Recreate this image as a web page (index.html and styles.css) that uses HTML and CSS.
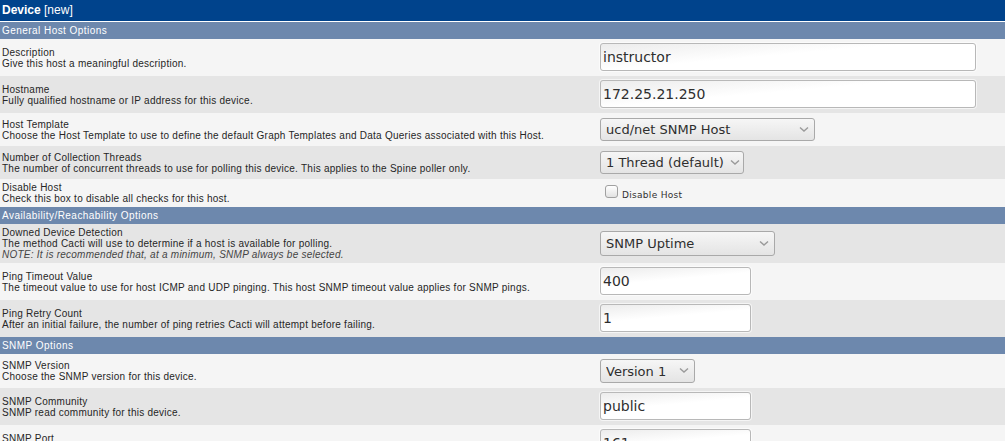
FILE: index.html
```html
<!DOCTYPE html>
<html>
<head>
<meta charset="utf-8">
<title>Device [new]</title>
<link rel="stylesheet" href="styles.css">
</head>
<body>
<div class="page-title"><b>Device</b> [new]</div>

<div class="section">General Host Options</div>
<div class="row light">
  <div class="lbl"><div>Description</div><div>Give this host a meaningful description.</div></div>
  <div class="ctl in"><input class="txt wide" type="text" value="instructor"></div>
</div>
<div class="row dark">
  <div class="lbl"><div>Hostname</div><div>Fully qualified hostname or IP address for this device.</div></div>
  <div class="ctl in"><input class="txt wide" type="text" value="172.25.21.250"></div>
</div>
<div class="row light">
  <div class="lbl"><div>Host Template</div><div>Choose the Host Template to use to define the default Graph Templates and Data Queries associated with this Host.</div></div>
  <div class="ctl sel"><span class="selwrap w-tpl"><select><option>ucd/net SNMP Host</option></select><svg class="chev" width="10" height="7" viewBox="0 0 10 7"><path d="M1 1.5 L5 5 L9 1.5" fill="none" stroke="#9a9a9a" stroke-width="1.4"/></svg></span></div>
</div>
<div class="row dark">
  <div class="lbl"><div>Number of Collection Threads</div><div>The number of concurrent threads to use for polling this device. This applies to the Spine poller only.</div></div>
  <div class="ctl sel"><span class="selwrap w-thr"><select><option>1 Thread (default)</option></select><svg class="chev" width="10" height="7" viewBox="0 0 10 7"><path d="M1 1.5 L5 5 L9 1.5" fill="none" stroke="#9a9a9a" stroke-width="1.4"/></svg></span></div>
</div>
<div class="row light">
  <div class="lbl"><div>Disable Host</div><div>Check this box to disable all checks for this host.</div></div>
  <div class="ctl chk"><input type="checkbox" class="cb" id="dis"><label for="dis" class="cblbl">Disable Host</label></div>
</div>

<div class="section">Availability/Reachability Options</div>
<div class="row dark">
  <div class="lbl"><div>Downed Device Detection</div><div>The method Cacti will use to determine if a host is available for polling.</div><div class="note">NOTE: It is recommended that, at a minimum, SNMP always be selected.</div></div>
  <div class="ctl sel"><span class="selwrap w-up"><select><option>SNMP Uptime</option></select><svg class="chev" width="10" height="7" viewBox="0 0 10 7"><path d="M1 1.5 L5 5 L9 1.5" fill="none" stroke="#9a9a9a" stroke-width="1.4"/></svg></span></div>
</div>
<div class="row light">
  <div class="lbl"><div>Ping Timeout Value</div><div>The timeout value to use for host ICMP and UDP pinging. This host SNMP timeout value applies for SNMP pings.</div></div>
  <div class="ctl in"><input class="txt narrow" type="text" value="400"></div>
</div>
<div class="row dark">
  <div class="lbl"><div>Ping Retry Count</div><div>After an initial failure, the number of ping retries Cacti will attempt before failing.</div></div>
  <div class="ctl in"><input class="txt narrow" type="text" value="1"></div>
</div>

<div class="section">SNMP Options</div>
<div class="row light">
  <div class="lbl"><div>SNMP Version</div><div>Choose the SNMP version for this device.</div></div>
  <div class="ctl sel"><span class="selwrap w-ver"><select><option>Version 1</option></select><svg class="chev" width="10" height="7" viewBox="0 0 10 7"><path d="M1 1.5 L5 5 L9 1.5" fill="none" stroke="#9a9a9a" stroke-width="1.4"/></svg></span></div>
</div>
<div class="row dark">
  <div class="lbl"><div>SNMP Community</div><div>SNMP read community for this device.</div></div>
  <div class="ctl in"><input class="txt narrow" type="text" value="public"></div>
</div>
<div class="row light">
  <div class="lbl"><div>SNMP Port</div><div>Enter the UDP port number to use for SNMP (default is 161).</div></div>
  <div class="ctl in"><input class="txt narrow" type="text" value="161"></div>
</div>
</body>
</html>
```

FILE: styles.css
```css
html, body {
  margin: 0;
  padding: 0;
  background: #ffffff;
}
body {
  font-family: "Liberation Sans", Arial, sans-serif;
  color: #000;
}
.page-title {
  background: #00438c;
  color: #fff;
  font-size: 12px;
  height: 21px;
  line-height: 21px;
  padding-left: 2px;
  margin-bottom: 1px;
}
.section {
  background: #6d88ad;
  color: #fff;
  font-size: 10px;
  letter-spacing: 0.45px;
  height: 17px;
  line-height: 17px;
  padding-left: 2px;
}
.row {
  display: flex;
  align-items: center;
}
.row.light { background: #f5f5f5; }
.row.dark { background: #e5e5e5; }
.lbl {
  width: 597px;
  flex: none;
  box-sizing: border-box;
  padding: 3px 2px;
  font-size: 10px;
  line-height: 11px;
  letter-spacing: 0.25px;
  color: #262626;
}
.lbl .note {
  font-style: italic;
  color: #444444;
}
.ctl {
  flex: 1;
  padding-left: 3px;
  display: flex;
  align-items: center;
}
.ctl.in { padding-top: 4px; padding-bottom: 5px; }
.ctl.sel { padding-top: 5px; padding-bottom: 5px; }
.txt {
  box-sizing: border-box;
  height: 28px;
  border: 1px solid #b8b8b8;
  border-radius: 3px;
  background: linear-gradient(175deg, #ececec 0%, #ffffff 45%, #ffffff 100%);
  box-shadow: 0 0 0 1px rgba(255,255,255,0.6);
  font-family: "DejaVu Sans", sans-serif;
  font-size: 14px;
  color: #2e2e2e;
  padding: 0 2px;
  margin: 0;
  outline: none;
}
.txt.wide { width: 376px; }
.txt.narrow { width: 151px; }
.selwrap {
  position: relative;
  display: inline-block;
}
.selwrap select {
  -webkit-appearance: none;
  appearance: none;
  box-sizing: border-box;
  width: 100%;
  height: 23px;
  border: 1px solid #a9a9a9;
  border-radius: 3px;
  background: linear-gradient(#f6f6f6, #e4e4e4);
  font-family: "DejaVu Sans", sans-serif;
  font-size: 13px;
  color: #2e2e2e;
  padding: 0 16px 0 5px;
  margin: 0;
  display: block;
  outline: none;
}
.selwrap .chev {
  position: absolute;
  right: 6px;
  top: 8px;
  pointer-events: none;
}
.w-tpl { width: 215px; }
.w-thr { width: 144px; }
.w-thr select { padding-right: 11px; }
.w-thr .chev { right: 4px; }
.w-up { width: 175px; }
.w-up select { height: 25px; }
.w-up .chev { top: 9px; }
.w-ver { width: 95px; }
.w-ver select { height: 24px; }
.chk {
  align-items: center;
}
.cb {
  -webkit-appearance: none;
  appearance: none;
  width: 13px;
  height: 13px;
  margin: 0 0 3px 5px;
  border: 1px solid #a0a0a0;
  border-radius: 3px;
  background: linear-gradient(#ffffff, #e2e2e2);
  box-sizing: border-box;
}
.cblbl {
  font-family: "DejaVu Sans", sans-serif;
  font-size: 9px;
  color: #303030;
  margin-left: 4px;
  margin-top: 4px;
  letter-spacing: 0.3px;
}
```
